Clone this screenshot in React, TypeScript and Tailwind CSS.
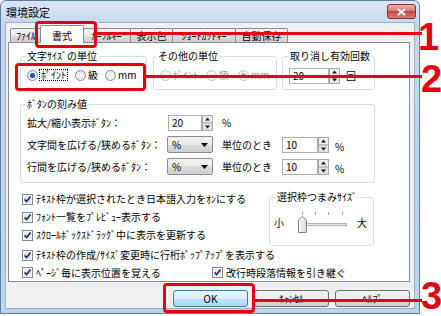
import React from "react";

const face = "bg-[linear-gradient(#f2f2f2,#ebebeb_50%,#dddddd_50%,#cfcfcf)]";

function Radio({ on = false, off = false }: { on?: boolean; off?: boolean }) {
  return (
    <svg width="11" height="11" viewBox="0 0 11 11" className="shrink-0">
      <circle cx="5.5" cy="5.5" r="5" fill={off ? "#f4f4f4" : "#eceef2"} stroke={off ? "#c4c4c4" : "#7f8a99"} />
      {on && <circle cx="5.5" cy="5.5" r="2.6" fill={off ? "#a9a9a9" : "#1f5aa6"} />}
    </svg>
  );
}

function Check() {
  return (
    <svg width="11" height="11" viewBox="0 0 11 11" className="shrink-0">
      <rect x="0.5" y="0.5" width="10" height="10" fill="#f7f7f7" stroke="#7f8a99" />
      <rect x="2" y="2" width="7" height="7" fill="#e4e7ec" />
      <path d="M2.6 5.4 4.6 7.6 8.6 2.6" fill="none" stroke="#1d2f5c" strokeWidth="1.6" />
    </svg>
  );
}

function Spin() {
  return (
    <svg width="11" height="16" viewBox="0 0 11 16" className="shrink-0">
      <rect x="0.5" y="0.5" width="10" height="7.5" fill="#efefef" stroke="#a9a9a9" />
      <rect x="0.5" y="8" width="10" height="7.5" fill="#e3e3e3" stroke="#a9a9a9" />
      <path d="M5.5 2.5 8 5.5H3z" fill="#1a1a1a" />
      <path d="M5.5 13.5 8 10.5H3z" fill="#1a1a1a" />
    </svg>
  );
}

function SpinBox({ value, w }: { value: string; w: string }) {
  return (
    <div className="flex h-[16px] shrink-0">
      <div className={`flex h-full items-center border border-[#abadb3] bg-white pl-[3px] ${w}`}>{value}</div>
      <Spin />
    </div>
  );
}

function Combo() {
  return (
    <div className={`flex h-[17px] w-[46px] shrink-0 items-center justify-between rounded-[2px] border border-[#8c8c8c] ${face} px-[4px]`}>
      <span>%</span>
      <svg width="7" height="4" viewBox="0 0 7 4">
        <path d="M0 0h7L3.5 4z" fill="#000" />
      </svg>
    </div>
  );
}

function Group({ label, at, className, children }: { label: string; at: string; className: string; children?: React.ReactNode }) {
  return (
    <div className={`relative shrink-0 rounded-[3px] border border-[#d5dfe5] ${className}`}>
      <span className={`absolute -top-[7px] bg-white px-[2px] leading-[12px] ${at}`}>{label}</span>
      {children}
    </div>
  );
}

function Tab({ label, className }: { label: string; className: string }) {
  return (
    <div className={`flex h-[14px] items-center justify-center rounded-t-[2px] border border-b-0 border-[#898c95] ${face} ${className}`}>
      {label}
    </div>
  );
}

function CheckRow({ text, className = "" }: { text: string; className?: string }) {
  return (
    <div className={`flex h-[18px] items-center gap-[3px] ${className}`}>
      <Check />
      <span>{text}</span>
    </div>
  );
}

export default function App() {
  return (
    <div className="relative h-[316px] w-[441px] overflow-hidden whitespace-nowrap bg-white font-['Noto_Sans_CJK_JP','Noto_Sans',sans-serif] text-[10px] leading-[12px] text-black">
      <div className="flex h-[314px] w-[420px] flex-col rounded-t-[6px] border border-[#5f7fa6] bg-[linear-gradient(#dbe6f4,#c6d8ee_24px,#bfd3eb)]">
        {/* title bar */}
        <div className="flex h-[21px] shrink-0 items-start justify-between pl-[5px] pr-[3px]">
          <span className="mt-[5px] text-[11px]">環境設定</span>
          <div className="mt-[3px] flex h-[15px] w-[29px] items-center justify-center rounded-[3px] border border-[#7d3730] bg-[linear-gradient(#eab1a5,#d7776b_50%,#c24b3e_50%,#d58476)]">
            <svg width="9" height="8" viewBox="0 0 9 8">
              <path d="M1 1l7 6M8 1 1 7" stroke="#fff" strokeWidth="2" />
            </svg>
          </div>
        </div>

        {/* client */}
        <div className="mx-[4px] mb-[4px] flex flex-1 flex-col border border-[#9bb0c9] bg-[#f0f0f0] pl-[2px] pt-[2px]">
          <div className="flex h-[17px] items-end">
            <Tab label="ﾌｧｲﾙ" className="ml-[2px] w-[32px]" />
            <div className="relative z-10 -mb-px -ml-[2px] flex h-[18px] w-[44px] items-center justify-center rounded-t-[2px] border border-b-0 border-[#898c95] bg-white pt-[2px]">
              書式
            </div>
            <Tab label="ｶｰｿﾙｷｰ" className="-ml-[2px] w-[49px]" />
            <Tab label="表示色" className="-ml-px w-[43px]" />
            <Tab label="ｼｮｰﾄｶｯﾄｷｰ" className="-ml-px w-[64px]" />
            <Tab label="自動保存" className="-ml-px w-[53px]" />
          </div>

          <div className="flex h-[240px] w-[402px] flex-col border border-[#898c95] bg-white">
            {/* unit groups */}
            <div className="ml-[11px] mt-[13px] flex">
              <Group label="文字ｻｲｽﾞの単位" at="left-[4px]" className="h-[34px] w-[127px]">
                <div className="flex items-center pl-[6px] pt-[12px]">
                  <Radio on />
                  <span className="ml-[1px] border border-dotted border-black px-[1px] leading-[10px]">ﾎﾟｲﾝﾄ</span>
                  <span className="ml-[7px]"><Radio /></span>
                  <span className="ml-[2px]">級</span>
                  <span className="ml-[7px]"><Radio /></span>
                  <span className="ml-[2px]">mm</span>
                </div>
              </Group>
              <Group label="その他の単位" at="left-[2px]" className="ml-[6px] h-[34px] w-[124px]">
                <div className="flex items-center pl-[6px] pt-[12px] text-[#9a9a9a]">
                  <Radio off />
                  <span className="ml-[2px]">ﾎﾟｲﾝﾄ</span>
                  <span className="ml-[8px]"><Radio off /></span>
                  <span className="ml-[2px]">級</span>
                  <span className="ml-[9px]"><Radio on off /></span>
                  <span className="ml-[2px]">mm</span>
                </div>
              </Group>
              <Group label="取り消し有効回数" at="left-[5px]" className="ml-[5px] h-[34px] w-[93px]">
                <div className="flex items-center pl-[6px] pt-[11px]">
                  <SpinBox value="20" w="w-[40px]" />
                  <span className="ml-[6px]">回</span>
                </div>
              </Group>
            </div>

            {/* step values */}
            <Group label="ﾎﾞﾀﾝの刻み値" at="left-[4px]" className="ml-[11px] mt-[14px] h-[79px] w-[355px]">
              <div className="flex flex-col pl-[6px] pt-[10px]">
                <div className="flex h-[16px] items-center">
                  <span className="w-[141px]">拡大/縮小表示ﾎﾞﾀﾝ：</span>
                  <SpinBox value="20" w="w-[34px]" />
                  <span className="ml-[9px]">%</span>
                </div>
                <div className="mt-[5px] flex h-[17px] items-center">
                  <span className="w-[140px]">文字間を広げる/狭めるﾎﾞﾀﾝ：</span>
                  <Combo />
                  <span className="ml-[9px] w-[60px]">単位のとき</span>
                  <SpinBox value="10" w="w-[36px]" />
                  <span className="ml-[6px] mt-[5px]">%</span>
                </div>
                <div className="mt-[5px] flex h-[17px] items-center">
                  <span className="w-[140px]">行間を広げる/狭めるﾎﾞﾀﾝ：</span>
                  <Combo />
                  <span className="ml-[9px] w-[60px]">単位のとき</span>
                  <SpinBox value="10" w="w-[36px]" />
                  <span className="ml-[6px] mt-[5px]">%</span>
                </div>
              </div>
            </Group>

            {/* checkboxes */}
            <div className="ml-[13px] mt-[7px] flex flex-col">
              <div className="flex items-start">
                <div className="flex w-[247px] flex-col">
                  <CheckRow text="ﾃｷｽﾄ枠が選択されたとき日本語入力をｵﾝにする" />
                  <CheckRow text="ﾌｫﾝﾄ一覧をﾌﾟﾚﾋﾞｭｰ表示する" />
                  <CheckRow text="ｽｸﾛｰﾙﾎﾞｯｸｽﾄﾞﾗｯｸﾞ中に表示を更新する" />
                </div>
                <Group label="選択枠つまみｻｲｽﾞ" at="left-[5px]" className="mt-[7px] h-[49px] w-[105px]">
                  <div className="flex h-full items-center pl-[4px] pt-[2px]">
                    <span>小</span>
                    <svg className="ml-[9px]" width="57" height="24" viewBox="0 0 57 24">
                      <defs>
                        <linearGradient id="thumb" x1="0" y1="0" x2="1" y2="0">
                          <stop offset="0" stopColor="#fbfbfb" />
                          <stop offset="1" stopColor="#d6d9de" />
                        </linearGradient>
                      </defs>
                      <path d="M9.5 1v3M22.5 1v3M35.5 1v3M49.5 1v3" stroke="#a0a0a0" />
                      <rect x="8.5" y="12.5" width="45" height="2" fill="#e8e8e8" stroke="#b4b4b4" />
                      <path d="M5.5 9 9.5 5.5 13.5 9v12.5h-8z" fill="url(#thumb)" stroke="#7b8798" />
                    </svg>
                    <span className="ml-[7px]">大</span>
                  </div>
                </Group>
              </div>
              <CheckRow text="ﾃｷｽﾄ枠の作成/ｻｲｽﾞ変更時に行桁ﾎﾟｯﾌﾟｱｯﾌﾟを表示する" />
              <div className="flex h-[17px] items-center">
                <CheckRow text="ﾍﾟｰｼﾞ毎に表示位置を覚える" className="w-[190px]" />
                <CheckRow text="改行時段落情報を引き継ぐ" />
              </div>
            </div>
          </div>

          {/* buttons */}
          <div className="mt-[8px] flex w-[402px] justify-end gap-[6px]">
            <div className="flex h-[17px] w-[75px] items-center justify-center rounded-[3px] border border-[#3c7fb1] bg-[linear-gradient(#eaf6fd,#d9f0fc_50%,#bee6fd_50%,#a7d9f5)]">
              OK
            </div>
            <div className={`flex h-[17px] w-[75px] items-center justify-center rounded-[3px] border border-[#707070] ${face}`}>
              ｷｬﾝｾﾙ
            </div>
            <div className={`flex h-[17px] w-[75px] items-center justify-center rounded-[3px] border border-[#707070] ${face}`}>
              ﾍﾙﾌﾟ
            </div>
          </div>
        </div>
      </div>

      {/* annotations */}
      <div className="absolute left-[35px] top-[21px] h-[27px] w-[62px] rounded-[4px] border-[3px] border-[#e60012]" />
      <div className="absolute left-[15px] top-[63px] h-[28px] w-[131px] rounded-[4px] border-[3px] border-[#e60012]" />
      <div className="absolute left-[163px] top-[283px] h-[30px] w-[92px] rounded-[4px] border-[3px] border-[#e60012]" />
      <div className="absolute left-[97px] top-[32px] h-[3px] w-[325px] bg-[#e60012]" />
      <div className="absolute left-[146px] top-[75px] h-[3px] w-[276px] bg-[#e60012]" />
      <div className="absolute left-[255px] top-[299px] h-[3px] w-[167px] bg-[#e60012]" />
      <span className="absolute left-[418px] top-[18px] font-['Liberation_Sans',Arial,sans-serif] text-[38px] font-bold leading-[38px] text-[#e60012]">1</span>
      <span className="absolute left-[421px] top-[60px] font-['Liberation_Sans',Arial,sans-serif] text-[38px] font-bold leading-[38px] text-[#e60012]">2</span>
      <span className="absolute left-[421px] top-[277px] font-['Liberation_Sans',Arial,sans-serif] text-[38px] font-bold leading-[38px] text-[#e60012]">3</span>
    </div>
  );
}
